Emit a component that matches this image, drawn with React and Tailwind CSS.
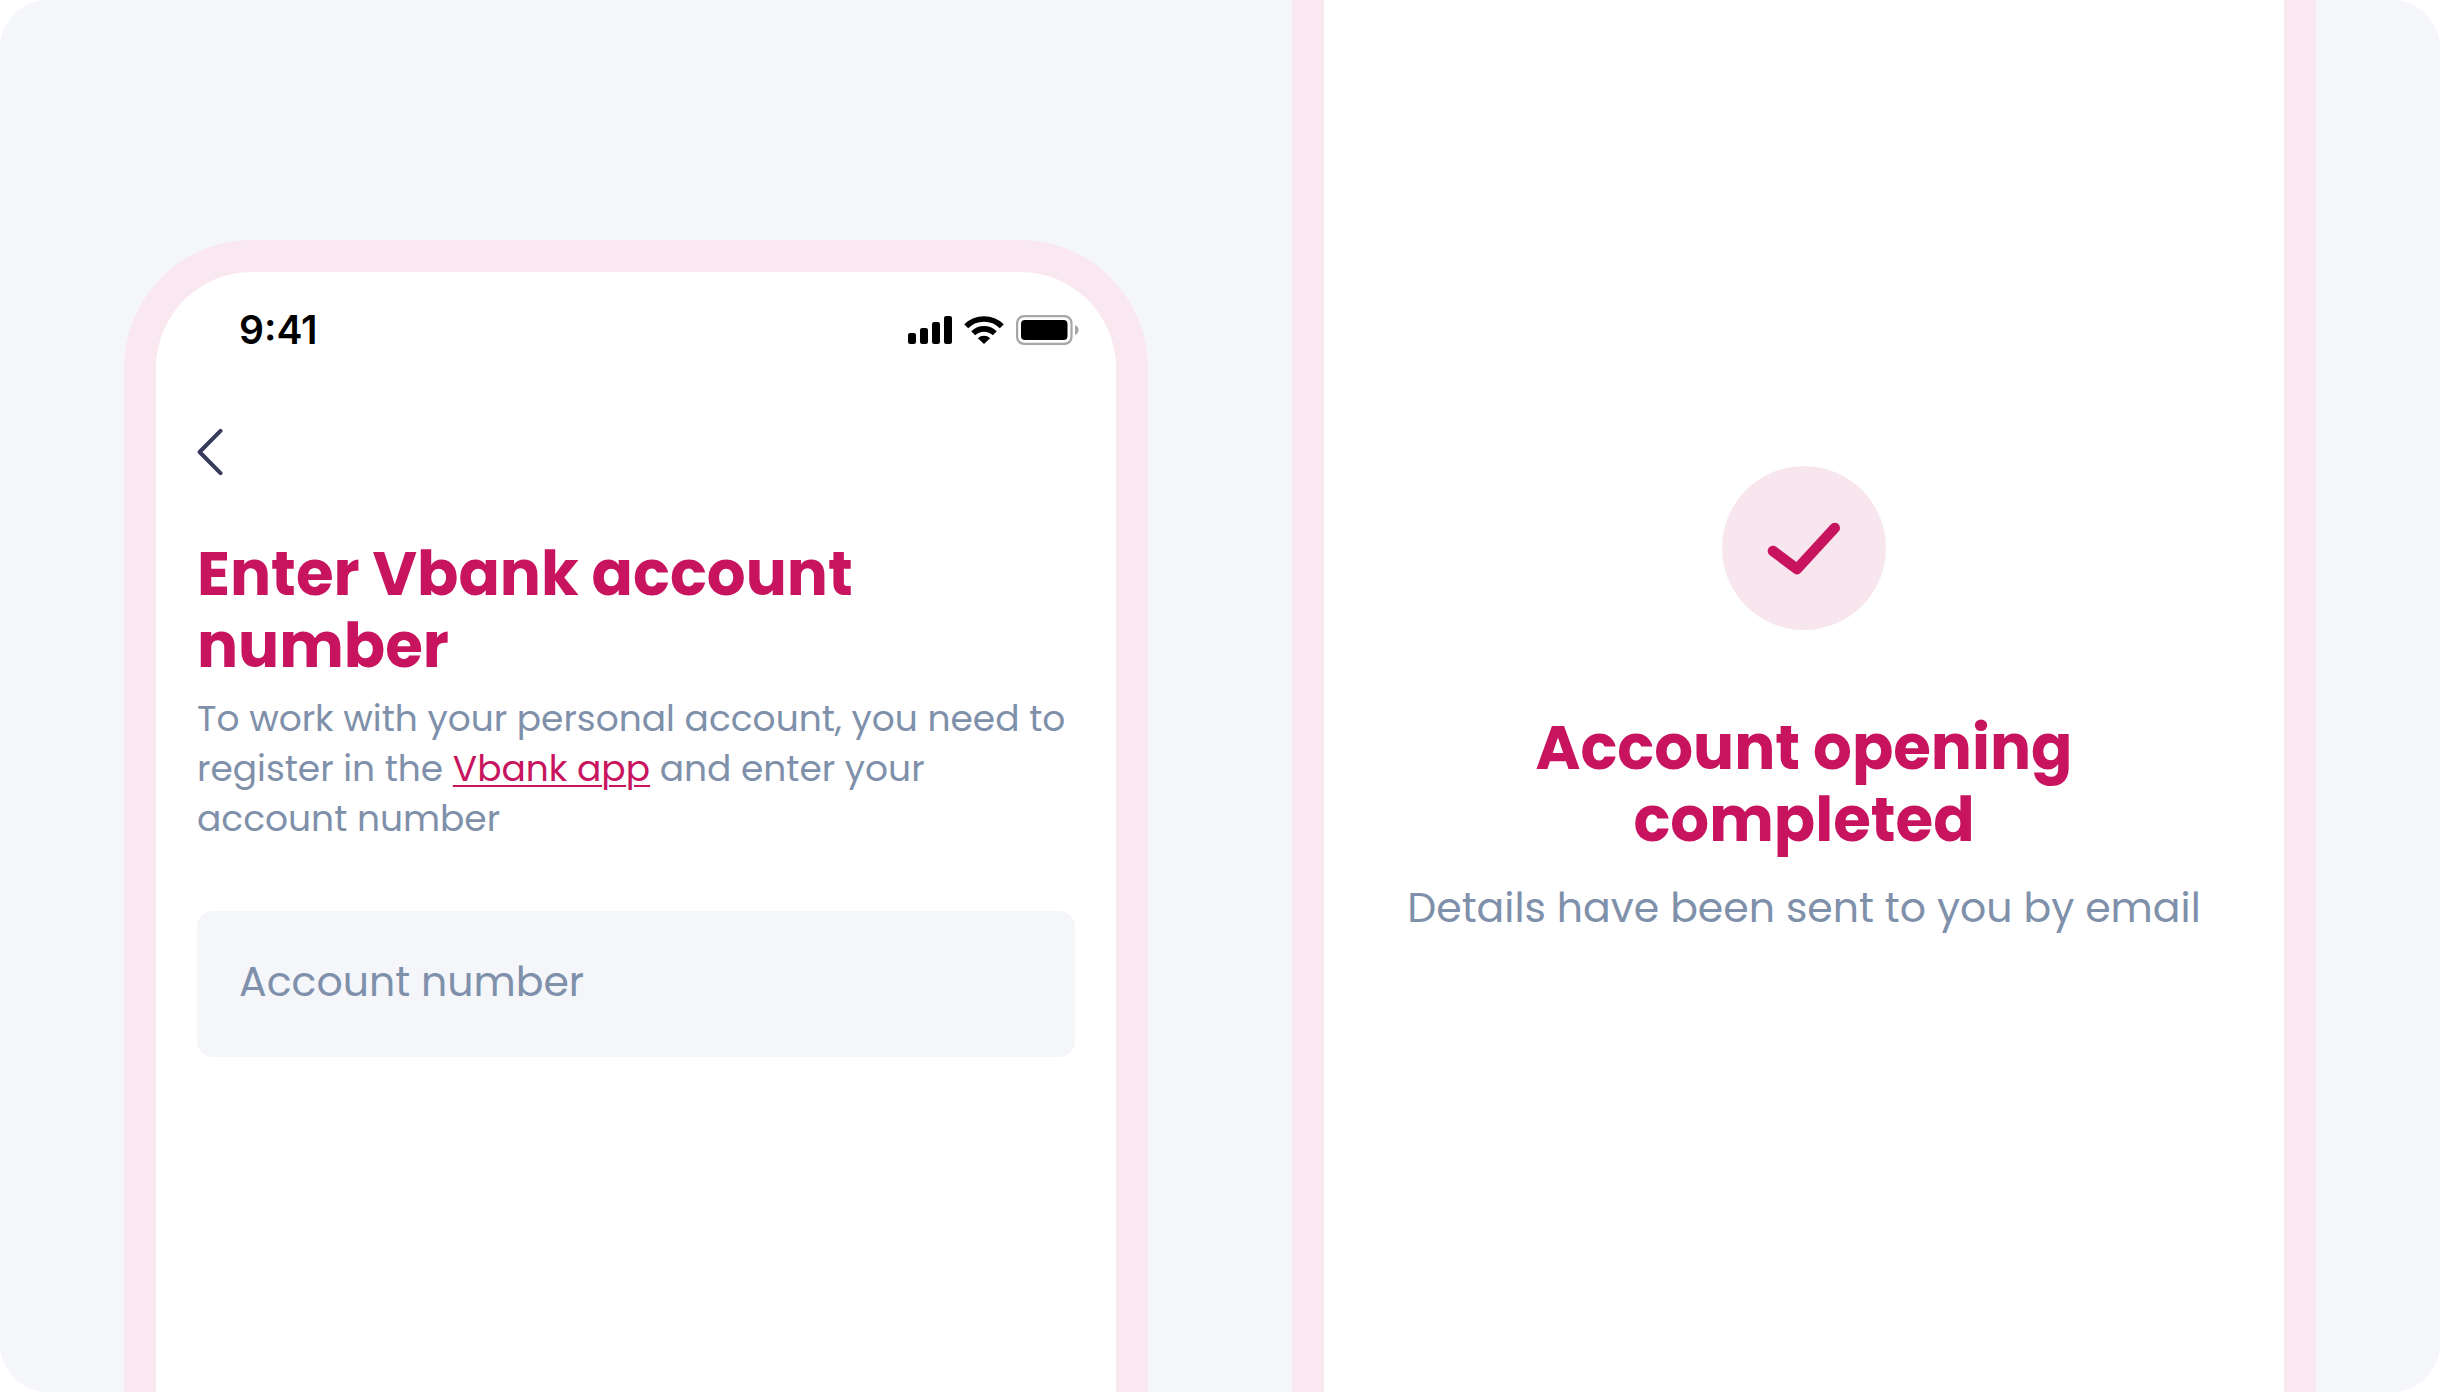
function SignalIcon() {
  return (
    <svg className="h-7 w-11" viewBox="0 0 44 28" aria-hidden="true">
      <rect x="0" y="17" width="8" height="11" rx="2.2" />
      <rect x="12" y="12" width="8" height="16" rx="2.2" />
      <rect x="24" y="6" width="8" height="22" rx="2.2" />
      <rect x="36" y="0" width="8" height="28" rx="2.2" />
    </svg>
  );
}

function WifiIcon() {
  return (
    <svg className="h-7 w-10" viewBox="0 0 40 28" fill="none" aria-hidden="true">
      <path d="M2.2 10.2 A25.5 25.5 0 0 1 37.8 10.2" stroke="#000" strokeWidth="5.6" />
      <path d="M9.2 17.2 A15.6 15.6 0 0 1 30.8 17.2" stroke="#000" strokeWidth="5.6" />
      <path d="M20 28 L13.9 22.2 A9 9 0 0 1 26.1 22.2 Z" fill="#000" />
    </svg>
  );
}

function BatteryIcon() {
  return (
    <svg className="h-[30px] w-[63px]" viewBox="0 0 63 30" fill="none" aria-hidden="true">
      <rect x="1.1" y="1.1" width="54.4" height="27.8" rx="7" stroke="#a6a6a6" strokeWidth="2.2" />
      <rect x="5" y="5" width="46.5" height="20" rx="4" fill="#000" />
      <path d="M59 10 C61 10.8 62.6 12.7 62.6 15 C62.6 17.3 61 19.2 59 20 Z" fill="#a6a6a6" />
    </svg>
  );
}

function StatusBar() {
  return (
    <header className="flex items-center justify-between pt-9 pr-[37px] pl-[83px]">
      <time className="font-[Inter,sans-serif] text-[39px] leading-[44px] font-semibold text-black">9:41</time>
      <div className="flex items-center gap-3">
        <SignalIcon />
        <WifiIcon />
        <BatteryIcon />
      </div>
    </header>
  );
}

function AccountNumberScreen() {
  return (
    <section className="flex flex-1 flex-col rounded-t-[128px] border-x-[32px] border-t-[32px] border-[#fae8f0] bg-white">
      <StatusBar />
      <form className="flex flex-col px-[41px] pt-[76px]">
        <button type="button" aria-label="Back" className="flex h-12 w-8 items-center">
          <svg className="h-12 w-7" viewBox="0 0 28 48" fill="none" aria-hidden="true">
            <path d="M23.5 2.8 L2.6 24 L23.5 45.2" stroke="#373a5c" strokeWidth="4" strokeLinecap="round" strokeLinejoin="round" />
          </svg>
        </button>
        <h1 className="pt-[62px] text-[61px] leading-[72px] font-bold text-[#c8145f]">Enter Vbank account number</h1>
        <p className="pt-3 text-[36px] leading-[50px] text-[#7f90aa]">
          To work with your personal account, you need to register in the{" "}
          <a href="#vbank-app" className="text-[#c8145f] underline decoration-2 underline-offset-4">Vbank app</a>{" "}
          and enter your account number
        </p>
        <input
          type="text"
          inputMode="numeric"
          aria-label="Account number"
          placeholder="Account number"
          className="mt-[67px] h-[146px] w-full rounded-2xl bg-[#f4f6fa] px-[42px] pb-1.5 text-[41px] text-[#373a5c] outline-none placeholder:text-[#7f90aa]"
        />
      </form>
    </section>
  );
}

function CompletedScreen() {
  return (
    <section className="flex flex-1 flex-col items-center border-x-[32px] border-[#fae8f0] bg-white px-12 pt-[466px] text-center">
      <svg className="size-[164px]" viewBox="0 0 164 164" fill="none" aria-hidden="true">
        <circle cx="82" cy="82" r="82" fill="#f8e6ee" />
        <path d="M51 85 L75 103 L112.7 62" stroke="#c8145f" strokeWidth="10.6" strokeLinecap="round" strokeLinejoin="round" />
      </svg>
      <h2 className="max-w-[640px] pt-[82px] text-[61px] leading-[72px] font-bold text-[#c8145f]">Account opening completed</h2>
      <p className="pt-[22px] text-[41px] leading-[60px] text-[#7f90aa]">Details have been sent to you by email</p>
    </section>
  );
}

export default function App() {
  return (
    <div className="min-h-screen bg-white">
      <main className="flex min-h-screen gap-36 rounded-[48px] bg-[#f4f6fa] px-[124px] font-[Poppins,Inter,sans-serif]">
        <div className="flex flex-1 pt-60">
          <AccountNumberScreen />
        </div>
        <div className="flex flex-1">
          <CompletedScreen />
        </div>
      </main>
    </div>
  );
}
